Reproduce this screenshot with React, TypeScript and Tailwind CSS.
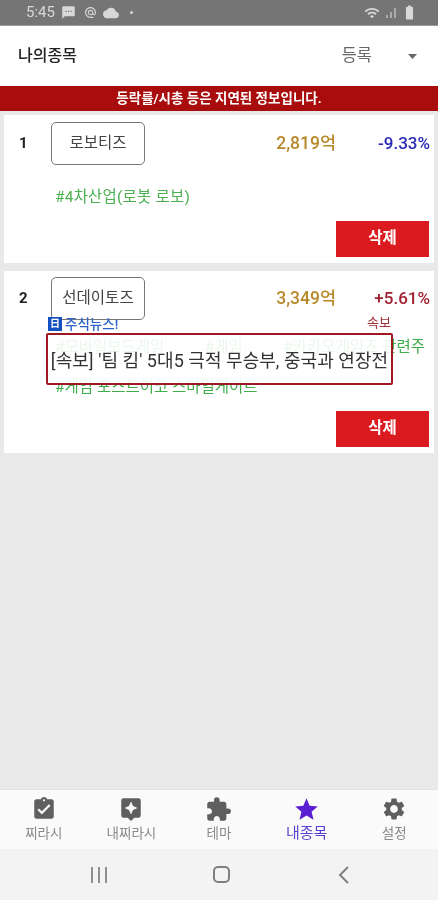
import React from "react";
import { MdAssignmentTurnedIn, MdAssistant, MdExtension, MdStar, MdSettings, MdCloud, MdSms, MdAlternateEmail, MdWifi, MdBatteryFull } from "react-icons/md";

const font = { fontFamily: '"Roboto","Noto Sans CJK KR",sans-serif' };

function Tab({ icon, label, active }: { icon: React.ReactNode; label: string; active?: boolean }) {
  return (
    <div className={active ? "flex flex-col items-center text-[#5a1fd0]" : "flex flex-col items-center text-[#5f5f5f]"}>
      <div className="h-[24px] flex items-center justify-center">{icon}</div>
      <span className={active ? "mt-[3px] text-[15px] leading-[18px] text-[#5a3fd0]" : "mt-[3px] text-[13.5px] leading-[18px] text-[#8a8a8a]"}>{label}</span>
    </div>
  );
}

function Row({ n, name, cap, pct, pctClass, tall, children }: { n: string; name: string; cap: string; pct: string; pctClass: string; tall?: boolean; children: React.ReactNode }) {
  return (
    <div className={tall ? "relative mx-[4px] h-[182px] bg-white flex flex-col px-[15px] pt-[6px] pb-[6px]" : "relative mx-[4px] h-[148px] bg-white flex flex-col px-[15px] pt-[7px] pb-[6px]"}>
      <div className="flex items-center h-[43px]">
        <span className="w-[32px] text-[15px] font-bold text-[#222]">{n}</span>
        <div className="w-[94px] h-[43px] rounded-[5px] border border-[#777] flex items-center justify-center text-[15.5px] text-[#444]">{name}</div>
        <span className="ml-auto text-[17.5px] font-medium text-[#b8892a]">{cap}</span>
        <span className={"w-[94px] -mr-[11px] text-right text-[17px] font-medium " + pctClass}>{pct}</span>
      </div>
      <div className="flex-1 relative">{children}</div>
      <div className="flex justify-end -mr-[10px]">
        <div className="w-[93px] h-[36px] bg-[#db1a1f] flex items-center justify-center text-white text-[15.5px] font-bold">삭제</div>
      </div>
    </div>
  );
}

export default function App() {
  return (
    <div className="relative w-[438px] h-[900px] flex flex-col bg-[#e9e9e9] overflow-hidden blur-[0.4px]" style={font}>
      <div className="h-[26px] bg-[#757575] border-b border-[#9a9a9a] flex items-center pl-[26px] text-[#d8d8d8]">
        <span className="text-[15px]">5:45</span>
        <MdSms size={15} className="ml-[6px]" />
        <MdAlternateEmail size={13} className="ml-[8px]" />
        <MdCloud size={16} className="ml-[6px]" />
        <span className="ml-[11px] w-[3px] h-[3px] rounded-full bg-[#d8d8d8]" />
        <MdWifi size={16} className="ml-auto" />
        <svg width="12" height="12" viewBox="0 0 12 12" className="ml-[5px]"><path d="M2 11V8M6 11V5M10 11V1" stroke="#bdbdbd" strokeWidth="1.5" /></svg>
        <MdBatteryFull size={17} className="ml-[4px] mr-[20px]" />
      </div>

      <div className="h-[60px] bg-white flex items-center pl-[18px]">
        <span className="text-[16px] font-medium text-[#222]">나의종목</span>
        <span className="ml-auto text-[16.5px] text-[#666]">등록</span>
        <svg width="9" height="5" viewBox="0 0 9 5" className="ml-[36px] mr-[21px]"><path d="M0 0h9L4.5 5z" fill="#666" /></svg>
      </div>

      <div className="h-[25px] bg-[#a80c0c] flex items-center justify-center text-white text-[13.5px] font-bold">
        등락률/시총 등은 지연된 정보입니다.
      </div>

      <div className="flex flex-col gap-[8px] pt-[4px]">
        <Row n="1" name="로보티즈" cap="2,819억" pct="-9.33%" pctClass="text-[#2a2ab8]">
          <div className="absolute left-[36px] top-[21px] text-[15.5px] tracking-[0.2px] text-[#4caf50]">#4차산업(로봇 로보)</div>
        </Row>
        <Row n="2" name="선데이토즈" cap="3,349억" pct="+5.61%" pctClass="text-[#a02030]" tall>
          <div className="absolute left-[36px] top-[16px] w-[370px] flex justify-between text-[15.5px] text-[#3fae4a] whitespace-nowrap">
            <span>#모바일보드게임</span><span>#게임</span><span>#카카오게임즈 관련주</span>
          </div>
          <div className="absolute left-[36px] top-[56px] text-[15.5px] text-[#3fae4a]">#게임 포스트이코 스마일게이트</div>
        </Row>
      </div>

      <div className="absolute left-[48px] top-[314px] flex items-center gap-[3px]">
        <div className="w-[14px] h-[14px] bg-[#1450c0] flex items-center justify-center text-white text-[10px] font-bold leading-none">日</div>
        <span className="text-[13.5px] font-medium text-[#2f62c8]">주식뉴스!</span>
      </div>
      <span className="absolute left-[367px] top-[313px] text-[13px] text-[#a03038]">속보</span>
      <div className="absolute left-[46px] top-[333px] w-[347px] h-[52px] rounded-[2px] border-2 border-[#a01824] bg-white/90 flex items-center justify-center pt-[3px] text-[18px] tracking-[0.05px] text-[#333] whitespace-nowrap">
        [속보] '팀 킴' 5대5 극적 무승부, 중국과 연장전
      </div>

      <div className="mt-auto h-[60px] bg-[#fafafa] border-t border-[#e2e2e2] grid grid-cols-5 pt-[7px]">
        <Tab icon={<MdAssignmentTurnedIn size={26} />} label="찌라시" />
        <Tab icon={<MdAssistant size={26} />} label="내찌라시" />
        <Tab icon={<MdExtension size={27} />} label="테마" />
        <Tab icon={<MdStar size={27} />} label="내종목" active />
        <Tab icon={<MdSettings size={26} />} label="설정" />
      </div>

      <div className="h-[51px] bg-[#f3f3f3] flex items-center">
        <svg width="18" height="16" viewBox="0 0 18 16" className="ml-[90px]"><path d="M2 0v16M9 0v16M16 0v16" stroke="#8f8f8f" strokeWidth="2" /></svg>
        <div className="ml-[105px] w-[17px] h-[17px] rounded-[5px] border-2 border-[#7f7f7f]" />
        <svg width="12" height="18" viewBox="0 0 12 18" className="ml-[108px]"><path d="M10 1 2 9l8 8" stroke="#7f7f7f" strokeWidth="2" fill="none" /></svg>
      </div>
    </div>
  );
}
